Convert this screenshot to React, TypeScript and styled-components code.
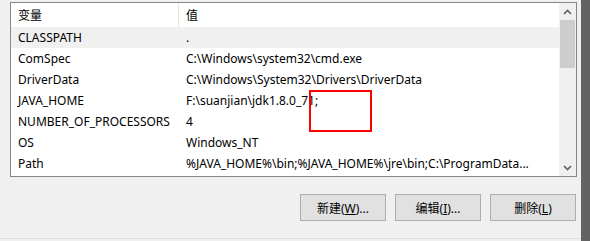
import styled, { createGlobalStyle } from 'styled-components'

const GlobalStyle = createGlobalStyle`
  body {
    margin: 0;
    background: #f0f0f0;
    font-family: "Noto Sans", "Noto Sans CJK SC", sans-serif;
    font-size: 12px;
    color: #000;
  }
`

const Page = styled.div`
  position: relative;
  display: flex;
  width: 590px;
  height: 241px;
  overflow: hidden;
`
const Dialog = styled.div`
  display: flex;
  flex-direction: column;
  width: 581px;
  padding: 2px 0 0 10px;
  box-sizing: border-box;
`
const EdgeStrip = styled.div`
  width: 9px;
  background: #636363;
`
const ListBox = styled.div`
  display: flex;
  width: 567px;
  height: 175px;
  border: 1px solid #828790;
  box-sizing: border-box;
  background: #fff;
`
const Table = styled.div`
  flex: 1;
  display: flex;
  flex-direction: column;
  overflow: hidden;
`
const HeaderRow = styled.div`
  display: flex;
  height: 24px;
  align-items: center;
`
const HeaderCell = styled.div<{ $w?: number }>`
  ${(p) => (p.$w ? `width: ${p.$w}px;` : 'flex: 1;')}
  height: 100%;
  display: flex;
  align-items: center;
  padding-left: 7px;
  box-sizing: border-box;
  border-right: ${(p) => (p.$w ? '1px solid #e5e5e5' : 'none')};
`
const Row = styled.div<{ $selected?: boolean }>`
  display: flex;
  height: 21px;
  align-items: center;
  background: ${(p) => (p.$selected ? '#f0f0f0' : '#fff')};
`
const NameCell = styled.div`
  width: 168px;
  padding-left: 7px;
  box-sizing: border-box;
  white-space: nowrap;
`
const ValueCell = styled.div`
  flex: 1;
  min-width: 0;
  padding: 0 4px 0 7px;
  white-space: nowrap;
  overflow: hidden;
`
const ScrollBar = styled.div`
  width: 17px;
  display: flex;
  flex-direction: column;
  background: #f0f0f0;
`
const ArrowBox = styled.div`
  height: 17px;
  display: flex;
  align-items: center;
  justify-content: center;
`
const Track = styled.div`
  flex: 1;
  display: flex;
  flex-direction: column;
`
const Thumb = styled.div`
  height: 48px;
  margin: 0 1px;
  background: #cdcdcd;
`
const ButtonRow = styled.div`
  display: flex;
  justify-content: flex-end;
  gap: 9px;
  width: 566px;
  margin-top: 17px;
`
const Button = styled.button`
  width: 86px;
  height: 27px;
  border: 1px solid #adadad;
  background: #e1e1e1;
  font-family: inherit;
  font-size: 12px;
  color: #000;
  padding: 0;
  u {
    text-decoration: underline;
  }
`
const BottomLine = styled.div`
  margin-top: 17px;
  margin-left: -10px;
  height: 1px;
  background: #dcdcdc;
`
const Marker = styled.div`
  position: absolute;
  left: 309px;
  top: 90px;
  width: 63px;
  height: 42px;
  border: 2px solid #ff0000;
  box-sizing: border-box;
  pointer-events: none;
`

const Chevron = ({ up }: { up?: boolean }) => (
  <svg width="9" height="6" viewBox="0 0 9 6">
    <path
      d={up ? 'M1 5 L4.5 1.5 L8 5' : 'M1 1 L4.5 4.5 L8 1'}
      fill="none"
      stroke="#606060"
      strokeWidth="1.6"
    />
  </svg>
)

const vars = [
  { name: 'CLASSPATH', value: '.' },
  { name: 'ComSpec', value: 'C:\\Windows\\system32\\cmd.exe' },
  { name: 'DriverData', value: 'C:\\Windows\\System32\\Drivers\\DriverData' },
  { name: 'JAVA_HOME', value: 'F:\\suanjian\\jdk1.8.0_71;' },
  { name: 'NUMBER_OF_PROCESSORS', value: '4' },
  { name: 'OS', value: 'Windows_NT' },
  { name: 'Path', value: '%JAVA_HOME%\\bin;%JAVA_HOME%\\jre\\bin;C:\\ProgramData...' },
]

const App = () => {
  return (
    <Page>
      <GlobalStyle />
      <Dialog>
        <ListBox>
          <Table>
            <HeaderRow>
              <HeaderCell $w={168}>变量</HeaderCell>
              <HeaderCell>值</HeaderCell>
            </HeaderRow>
            {vars.map((v, i) => (
              <Row key={v.name} $selected={i === 0}>
                <NameCell>{v.name}</NameCell>
                <ValueCell>{v.value}</ValueCell>
              </Row>
            ))}
          </Table>
          <ScrollBar>
            <ArrowBox>
              <Chevron up />
            </ArrowBox>
            <Track>
              <Thumb />
            </Track>
            <ArrowBox>
              <Chevron />
            </ArrowBox>
          </ScrollBar>
        </ListBox>
        <ButtonRow>
          <Button>
            新建(<u>W</u>)...
          </Button>
          <Button>
            编辑(<u>I</u>)...
          </Button>
          <Button>
            删除(<u>L</u>)
          </Button>
        </ButtonRow>
        <BottomLine />
      </Dialog>
      <EdgeStrip />
      <Marker />
    </Page>
  )
}

export default App
